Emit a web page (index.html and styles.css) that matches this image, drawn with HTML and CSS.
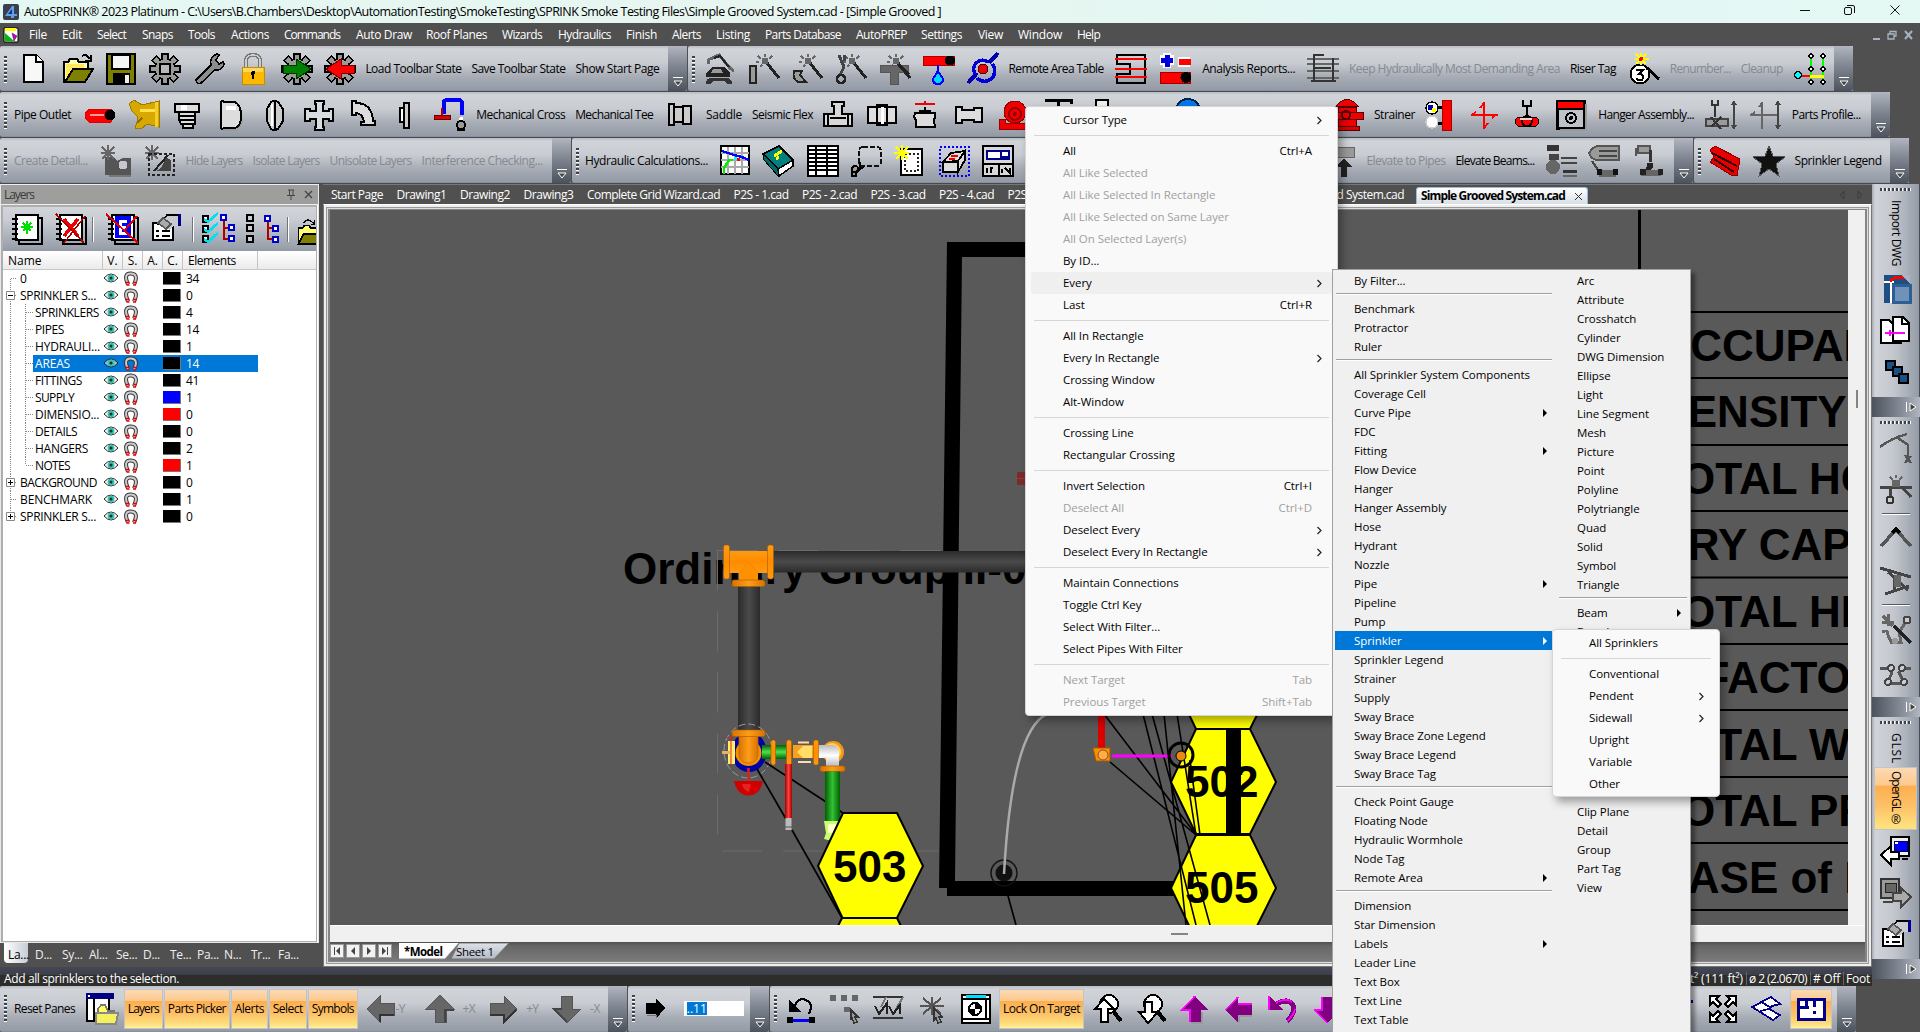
FILE: index.html
```html
<!DOCTYPE html>
<html lang="en">
<head>
<meta charset="utf-8">
<title>AutoSPRINK 2023 Platinum</title>
<link rel="stylesheet" href="styles.css">
</head>
<body>
<div class="app">
  <header class="titlebar">
    <svg class="app-logo" viewBox="0 0 16 16"><rect width="16" height="16" rx="2" fill="#3b3f4c"/><path d="M2 12L9 2h2v8h3v2h-3v2H8v-2z" fill="#5ea0ee"/><path d="M5 10l4-5v5z" fill="#1b2f7c"/></svg>
    <span data-w="917">AutoSPRINK® 2023 Platinum - C:\Users\B.Chambers\Desktop\AutomationTesting\SmokeTesting\SPRINK Smoke Testing Files\Simple Grooved System.cad - [Simple Grooved ]</span>
    <div class="winbtns">
      <svg width="120" height="23" viewBox="0 0 120 23"><path d="M0 10.500h10" stroke="#111"/><rect x="44.500" y="7.500" width="7" height="7" rx="1.500" fill="none" stroke="#111"/><path d="M47 5.500h6q1.500 0 1.500 1.500v6" fill="none" stroke="#111"/><path d="M90.500 5.500l9 9m0-9l-9 9" stroke="#111"/></svg>
    </div>
  </header>
  <nav class="menubar" id="menubar"></nav>
  <div class="tbrow" id="row1"></div>
  <div class="tbrow" id="row2"></div>
  <div class="tbrow" id="row3"></div>
  <main class="workspace">
    <div class="center">
      <div class="panes">
        <section class="layers">
          <div class="layers-box">
            <div class="pane-title"><span data-w="30">Layers</span>
              <svg width="30" height="14" viewBox="0 0 30 14"><path d="M3 2h6M4.500 2v5M8 2v5M2 7.500h8M6 8v4" stroke="#444" fill="none"/><path d="M20 3l7 7m0-7l-7 7" stroke="#444" fill="none" stroke-width="1.300"/></svg>
            </div>
            <div class="pane-body">
              <div class="pane-tools" id="panetools"></div>
              <div class="tree-head"><b>Name</b><b>V.</b><b>S.</b><b>A.</b><b>C.</b><b>Elements</b></div>
              <div class="tree" id="tree"></div>
            </div>
          </div>
          <div class="pane-tabs" id="panetabs"></div>
        </section>
        <section class="docs">
          <div class="doctabs" id="doctabs"></div>
          <div class="frame">
            <div class="view">
              <svg class="canvas" id="canvas" viewBox="330 210 1518 715"></svg>
              <div class="vscroll"><i></i></div>
            </div>
            <div class="hscroll"><i></i></div>
            <div class="sheets">
              <svg width="64" height="17" viewBox="0 0 64 17"><g fill="#f2f2f2" stroke="#999"><path d="M.5 1.500h13v13H.5zM16.500 1.500h13v13h-13zM32.500 1.500h13v13h-13zM48.500 1.500h13v13h-13z"/></g><path d="M4 4v8h1V4zM10 4v8L6 8zM25 4v8l-4-4zM37 4v8l4-4zM52 4v8l4-4zM57 4v8h1V4z" fill="#444"/></svg>
              <svg class="sheettabs" width="112" height="17" viewBox="0 0 112 17"><defs><linearGradient id="shg" x2="0" y2="1"><stop offset="0" stop-color="#dde1e8"/><stop offset="1" stop-color="#b4bac6"/></linearGradient></defs><path d="M52 16L60 0h50L95 16z" fill="url(#shg)" stroke="#777"/><path d="M0 0h60L46 16H0z" fill="#fff"/><path d="M60 0L46 16H0" fill="none" stroke="#888"/><text x="5" y="13" font-weight="700" textLength="39">*Model</text><text x="57" y="13" textLength="38">Sheet 1</text></svg>
            </div>
          </div>
        </section>
      </div>
      <footer class="status"><span data-w="175">Add all sprinklers to the selection.</span><div class="status-right"><span data-w="57">ft² (111 ft²)</span><i></i><span data-w="58">ø 2 (2.0670)</span><i></i><span data-w="27"># Off</span><i></i><span data-w="24">Foot</span></div></footer>
    </div>
    <aside class="dock" id="dock"></aside>
  </main>
  <div class="tbrow bottom" id="row4"></div>
</div>

<div class="menu main" id="menuSelect"></div>
<div class="submenu" id="menuEvery"></div>
<div class="menu small" id="menuSprinkler"></div>
<script src="script.js"></script>
</body>
</html>
```
FILE: styles.css
```css
* { box-sizing: border-box; }
body { margin: 0; width: 1920px; height: 1032px; overflow: hidden; background: #505050; font: 12px/16px "Open Sans", "Noto Sans", sans-serif; color: #000; white-space: nowrap; }
svg { display: block; flex: none; }
.app { display: flex; flex-direction: column; height: 1032px; width: 1920px; overflow: hidden; }
span[data-w] { display: inline-block; flex: none; }

.titlebar { height: 23px; flex: none; display: flex; align-items: center; padding-left: 3px; gap: 5px; background: linear-gradient(90deg, #e4f8f3, #e8f5f0 45%, #e2f8f4 70%, #e4f8f4); font-size: 12.5px; }
.app-logo { width: 16px; height: 16px; }
.winbtns { margin-left: auto; width: 120px; }
.menubar { height: 23px; flex: none; display: flex; align-items: center; background: #505050; color: #fff; padding-left: 3px; }
.menubar .doc-ico { width: 26px; }
.menubar .mdi { margin-left: auto; margin-right: 4px; }

.tbrow { display: flex; height: 46px; flex: none; align-items: stretch; }
.toolbar { display: flex; height: 45px; padding-top: 2px; align-items: center; background: linear-gradient(#b8bdc4 0, #d0d3d8 3px, #c9ccd2 38%, #a7acb5 70%, #949ba6); border-radius: 2px 0 0 2px; border-bottom: 1px solid #8a9098; box-shadow: 0 1px 0 #454a52; flex: none; margin-right: 1px; }
.handle { width: 3px; height: 27px; margin: 0 2px 0 4px; flex: none; background: repeating-linear-gradient(#3c4047 0 2px, #fff 2px 3px, transparent 3px 4px); }
.cap { width: 19px; height: 45px; margin: -2px 0 0 auto; align-self: flex-start; flex: none; background: linear-gradient(#b0b5bf, #858b96 40%, #4d535d); border-radius: 0 3px 3px 0; display: flex; align-items: flex-end; justify-content: center; padding-bottom: 3px; }
.ic { width: 43.8px; display: flex; justify-content: center; flex: none; }
.ic svg { width: 32px; height: 32px; overflow: visible; }
.lb { padding: 0 5px; flex: none; }
.off { color: #858990; }
.hl { height: 40px; display: flex; align-items: center; justify-content: center; background: linear-gradient(#fcd9b4 0, #fcc98d 28%, #fdaf50 30%, #fdc067 62%, #fee07c 90%, #fff0a0); border: 1px solid #c0c4c8; margin-right: 1px; flex: none; }
.gap { flex: none; }
.bottom .toolbar { height: 46px; padding-top: 0; }
.bottom .cap { height: 46px; margin-top: 0; }
.field { width: 60px; height: 15px; background: #fff; display: flex; align-items: center; padding-left: 3px; color: #fff; flex: none; }
.field b { background: #0078d7; font-weight: 400; line-height: 13px; width: 20px; text-align: center; }

.workspace { display: flex; height: 802px; flex: none; }
.center { width: 1872px; display: flex; flex-direction: column; flex: none; }
.panes { display: flex; height: 783px; flex: none; }
.layers { width: 323px; flex: none; display: flex; flex-direction: column; }
.layers-box { width: 319px; height: 759px; display: flex; flex-direction: column; border: 1px solid #e8e8e8; border-top-color: #eee; background: #fff; }
.pane-title { height: 20px; background: #9e9f9d; border-bottom: 1px solid #eee; display: flex; align-items: center; justify-content: space-between; padding: 0 3px; color: #3c3c3c; flex: none; }
.pane-body { flex: 1; border: solid #aeaeae; border-width: 2px 1px 1px 2px; display: flex; flex-direction: column; overflow: hidden; margin-right: 1px; }
.pane-tools { height: 44px; flex: none; display: flex; align-items: center; background: linear-gradient(#d2d5da, #c9ccd2 30%, #939ba6); overflow: hidden; padding-left: 1px; }
.pane-tools > * { flex: none; }
.pane-tools .ic { width: 44px; }
.pane-tools i { width: 2px; height: 25px; background: linear-gradient(90deg, #70757d 50%, #fff 50%); flex: none; }
.tree-head { height: 19px; display: flex; flex: none; background: linear-gradient(#fff, #ebebeb); border-bottom: 1px solid #c8c8c8; }
.tree-head b { font-weight: 400; border-right: 1px solid #c4c4c4; text-align: center; width: 20px; line-height: 20px; }
.tree-head b:first-child { width: 100px; text-align: left; padding-left: 5px; }
.tree-head b:last-child { width: 75px; text-align: left; padding-left: 5px; letter-spacing: -.5px; }
.tree { flex: 1; }
.trow { display: flex; height: 17px; align-items: center; }
.trow .nm { width: 100px; height: 17px; display: flex; flex: none; }
.trow .nm span { line-height: 17px; flex: 1; padding-left: 2px; overflow: hidden; }
.trow .eye, .trow .mag { width: 20px; height: 17px; }
.trow .sw { width: 18px; height: 13px; margin: 0 1px 0 20px; border: solid #777; border-width: 0 1px 1px 0; flex: none; }
.trow .el { width: 76px; line-height: 17px; padding-left: 4px; letter-spacing: -.4px; }
.trow.sel .nm span, .trow.sel .cells { background: #0078d7; color: #fff; }
.cells { display: flex; align-items: center; height: 17px; }
.pane-tabs { height: 24px; display: flex; color: #eee; line-height: 24px; padding-left: 4px; letter-spacing: -.3px; }
.pane-tabs span { width: 27px; padding-left: 4px; }
.pane-tabs span.on { background: linear-gradient(90deg, #fff, #c8ccd4); color: #000; height: 20px; width: 24px; padding-left: 4px; margin-right: 3px; border-radius: 0 0 4px 4px; }

.docs { width: 1549px; flex: none; display: flex; flex-direction: column; }
.doctabs { height: 20px; display: flex; align-items: center; color: #fff; flex: none; padding-left: 8px; border-top: 1px solid #777; background: #505050; }
.doctabs .dt { padding-right: 13.5px; flex: none; }
.doctabs .on { background: linear-gradient(#fff, #d9dfe6); color: #000; font-weight: 700; height: 17px; align-self: flex-end; display: flex; align-items: center; padding: 0 4px; gap: 9px; border: 1px solid #9bd; border-bottom: 0; border-radius: 3px 3px 0 0; }
.doctabs .arr { margin-left: auto; margin-right: 6px; }
.frame { border: 1px solid #777; border-top: 1px solid #fff; box-shadow: inset 0 0 0 2px #eee, inset 0 0 0 3px #999, inset 0 0 0 4px #ddd, inset 0 0 0 6px #858585; padding: 5px 6px 6px; height: 763px; display: flex; flex-direction: column; background: #eee; }
.view { display: flex; height: 715px; flex: none; }
.canvas { width: 1518px; height: 715px; background: #595959; }
.canvas text { font: 700 44px "Liberation Sans", sans-serif; }
.vscroll { width: 18px; background: #f0f0f0; display: flex; justify-content: center; align-items: center; }
.vscroll i { width: 2px; height: 18px; background: #858585; margin-bottom: 337px; }
.hscroll { height: 17px; background: #f0f0f0; border-top: 1px solid #fff; flex: none; display: flex; padding: 7px 0 0 841px; }
.hscroll i { width: 17px; height: 2px; background: #858585; }
.sheets { height: 19px; background: linear-gradient(#505050, #666 20%, #7a7a7a); display: flex; align-items: center; gap: 5px; flex: none; }
.sheettabs text { font: 11.5px "Open Sans", sans-serif; }
.sheettabs text[font-weight] { font-weight: 700; }

.status { height: 19px; flex: none; display: flex; align-items: center; justify-content: space-between; background: linear-gradient(#444854 0, #3b3e49 8px, #2d2d2c 8px); color: #fff; padding: 4px 2px 0 4px; }
.status-right { display: flex; align-items: center; gap: 2.5px; }
.status-right i { width: 1px; height: 13px; background: #666; }

.dock { width: 48px; display: flex; flex-direction: column; }
.vbar { display: flex; flex-direction: column; align-items: center; background: linear-gradient(90deg, #a7abb2 0, #d0d3d9 3px, #c4c8ce 45%, #949ba6); border-right: 1px solid #474d56; padding-top: 4px; }
.vbar .vh { width: 31px; height: 3px; background: repeating-linear-gradient(90deg, #3c4047 0 2px, #fff 2px 3px, transparent 3px 4px); flex: none; }
.vbar .vt { writing-mode: vertical-rl; display: flex; align-items: center; flex: none; }
.vbar .ic { width: 47px; align-items: center; }
.vbar .vsep { width: 28px; height: 2px; background: linear-gradient(#555b64 50%, #fff 50%); margin: 1px 0; flex: none; }
.vbar .vcap { margin-top: auto; height: 20px; width: 48px; background: linear-gradient(90deg, #4d535d, #858b96 60%, #b0b5bf); flex: none; display: flex; justify-content: flex-end; align-items: center; padding-right: 3px; }
.vbar .hl { width: 43px; margin: 0; background: linear-gradient(#fcd9b4 0, #fcc98d 28%, #fdaf50 30%, #fdc067 62%, #fee07c 95%); }

.menu, .submenu { font-size: 11.5px; }
.menu { position: absolute; background: #f9f9f9; border: 1px solid #d5d5d5; border-radius: 4px; padding: 2px 5px; box-shadow: 4px 5px 8px rgba(0,0,0,.35); }
.menu .it { height: 22px; display: flex; align-items: center; padding: 0 20px 0 32px; justify-content: space-between; border-radius: 3px; }
.menu .it.hot { background: #efefef; }
.menu .it.dis { color: #a0a0a0; }
.menu .it svg { margin-right: -11px; }
.menu .sp { height: 9px; padding: 4px 3px; }
.menu .sp::after { content: ""; display: block; height: 1px; background: #d6d6d6; }
.menu.main { left: 1025px; top: 106px; width: 313px; height: 610px; }
.menu.small { left: 1552px; top: 629px; width: 168px; height: 168px; }
.menu.small .it { padding: 0 20px 0 31px; }
.menu .t, .submenu .t { letter-spacing: -.06px; }
.submenu { position: absolute; left: 1332px; top: 269px; width: 359px; height: 770px; background: #f0f0f0; border: 1px solid #a0a0a0; box-shadow: 4px 4px 4px rgba(0,0,0,.4); display: flex; padding: 1px 2px; gap: 6px; }
.submenu .col1 { width: 217px; }
.submenu .col2 { width: 129px; }
.submenu .it { height: 19px; display: flex; align-items: center; justify-content: space-between; padding: 0 5px 0 19px; }
.submenu .col2 .it { padding: 0 6px 0 19px; }
.submenu .it.hot { background: #0078d7; color: #fff; }
.submenu .sp { height: 9px; padding: 3px 0 0 1px; }
.submenu .sp::after { content: ""; display: block; height: 2px; background: linear-gradient(#a0a0a0 50%, #fff 50%); }
```
FILE: script.js
```js
// ---- icon drawings, all on a 32 x 32 grid ----
var K = '#000', G = '#666', S = '#9a9a98';
function P(d, f, s, w) { return '<path d="' + d + '" fill="' + (f || 'none') + '"' + (s ? ' stroke="' + s + '" stroke-width="' + (w || 2) + '"' : '') + '/>'; }
function C(x, y, r, f, s, w) { return '<circle cx="' + x + '" cy="' + y + '" r="' + r + '" fill="' + (f || 'none') + '"' + (s ? ' stroke="' + s + '" stroke-width="' + (w || 2) + '"' : '') + '/>'; }
function R(x, y, w, h, f, s, sw) { return '<rect x="' + x + '" y="' + y + '" width="' + w + '" height="' + h + '" fill="' + (f || 'none') + '"' + (s ? ' stroke="' + s + '" stroke-width="' + (sw || 2) + '"' : '') + '/>'; }
function rot(s, n, step) { var o = ''; for (var i = 0; i < n; i++) o += '<g transform="rotate(' + i * step + ' 16 16)">' + s + '</g>'; return o; }
var gearTeeth = rot(P('M13 6V1h6v5', S, K, 1.500), 8, 45) + C(16, 16, 10, S, K, 1.500) + rot(R(14, 2, 4, 6, S), 8, 45);
var wand = P('M19 10l12 15', '', '#222', 3) + P('M17 1v3M10 3l3 3M24 3l-3 3M8 9h3M12 14l2-2', '', G, 2) + R(14, 5, 6, 6, G);
var prop = P('M3 10h20v17H3z', '#fff', K) + P('M6 18h3m3 0h8M6 23h3m3 0h8', '', K, 2) + P('M15 3h13v10h-5l-3 4-10-7z', '#c8ccd2') + P('M8 12L17 2h11', '', K, 1.500) + R(28, 1, 3, 12, '#008') + P('M8 10l5-5 8 6-5 5z', '#aaa', '#555', 1.5);
var notebook = P('M9 5h23v26H9z', '', K, 1.5) + R(6, 2, 22, 25, '#fff', K) + P('M2 6h6M2 11h6M2 16h6M2 21h6M2 26h6', '', K, 2);
var car = P('M4 11V7L15 2l11 13 4 3', '', G, 3) + P('M10 5l6-2 9 11', '', '#222', 2) + P('M2 24v-4l6-6h12l6 6v4z', '#222') + P('M9 16h8l2 4H7z', S) + P('M2 31q0-6 6-6h14q6 0 6 6h-5q-1-3-4-3h-7q-4 0-5 3z', '#333');
var I = {
  'new': P('M6 2h12l7 7v20H6z', '#f8f8f8', K) + P('M18 2v7h7', '#fff', K),
  open: P('M2 29V9h4l2-3h7l2 3h9v6', '#ffffb0', K) + P('M4 27V11h18v4H11z', '#ffe860') + P('M3 29l8-13h20l-8 13z', '#808000', K) + P('M20 3q4-3 8 3M29 2v6h-6', '', K),
  save: R(2, 1, 28, 30, '#808000', K) + R(7, 2, 18, 14, '#f5f5f5', K, 1.5) + R(8, 20, 17, 11, K) + R(20, 22, 4, 8, '#eee'),
  gear: gearTeeth + R(11, 11, 10, 10, '#b5b7ba', K, 1.5),
  wrench: P('M3 27L18 12q-2-8 6-11l2 1-3 5 3 4 4-2 1 2q-2 7-9 6L8 30q-4 2-5-3z', '#8d8d8d', K, 1.500),
  lock: P('M9 14V8q0-6 7-6t7 6v6', '', '#777', 4) + P('M9 14V8q0-6 7-6t7 6v6', '', '#ccc', 1.5) + R(5, 14, 22, 17, '#fdb800', '#c88a00', 1) + R(6, 15, 20, 4, '#ffd75a') + C(16, 20, 2, K) + P('M16 20v6', '', K, 2),
  gogreen: gearTeeth + P('M2 12h13V6l15 10-15 10v-6H2z', '#008000', '#003800', 1),
  gored: gearTeeth + P('M30 12H17V6L2 16l15 10v-6h13z', '#f00', '#700', 1),
  crane: car,
  w1: wand + R(2, 13, 6, 17, S, '#222', 2),
  w2: wand + P('M3 18h8l-2 4 6 7H7q-6-3-4-11z', S, '#222', 2),
  w3: wand + P('M4 2l5 12-4 8M9 2v6', '', '#444', 3) + C(6, 26, 4, '', '#222', 2.500),
  w4: wand + P('M1 12h28v7H19v12h-8V19H1z', G, '#555', 1) + P('M20 12l10 10', '', '#222', 3),
  drop: R(0, 3, 31, 9, '#f00', '#a00', 1) + C(27, 7.500, 5, K) + P('M15 12v6', '', '#00f', 2) + P('M15 18l5 8q0 5-5 5t-5-5z', '#00d8ff', '#00f', 2),
  target: P('M1 30L10 20M22 10L31 0', '', '#0000b0', 4) + P('M8 21a9 9 0 0 1 13-12M25 11a9 9 0 0 1-15 14', '', '#0000d8', 3.500) + C(16, 16, 5, '#e00', '#400', 1),
  tbl: P('M2 2h28v28H2v-9h13V11H2z', '', K, 2) + P('M0 6h32M0 16h32M0 24h32', '', '#f00', 1.800) + P('M3 11h11M3 21h11', '', K, 2),
  plus: R(1, 2, 14, 10, '#fff') + R(4, 0, 8, 15, '#fff') + P('M8 2v12M2 7h12', '', '#00d', 5) + R(19, 4, 12, 10, '#fff') + R(20, 6, 12, 6, '#f00') + R(1, 19, 30, 11, '#f00', '#900', 1) + C(27, 24.500, 5.500, K),
  sheet: P('M0 6h32M0 11h32M0 18h32M0 25h32', '', G, 2.500) + P('M7 1v27M26 5v23M7 2h10M4 28h25', '', '#333', 2.500) + P('M8 15h16', '', '#333', 2),
  riser: C(13, 21, 9.500, '#fff', K, 2) + P('M20 15l12 11', '', K, 3) + P('M14 0v12M8 6h14M9 1l10 10M19 1L9 11', '', '#ff0', 2) + C(14, 6, 2, '#f00') + P('M9 17h7l-4 4q5 0 4 4t-7 1', '', K, 2.200),
  nodes: P('M17 4v24M29 4v24', '', '#0f0', 2.500) + P('M4 23h12', '', '#f00', 2.500) + P('M16 23h14', '', '#ff0', 3) + C(4, 22, 3.500, '#0ff', K, 1.500) + C(17, 3, 2, '#fff', K, 1.500) + C(29, 3, 2, '#fff', K, 1.500) + C(17, 16, 2, '#fff', K, 1.500) + C(29, 16, 2, '#fff', K, 1.500) + C(17, 29, 2, '#fff', K, 1.500) + C(29, 29, 2, '#fff', K, 1.500),
  outlet: P('M5 10h22q5 6 0 13H5q-8-6 0-13z', '#f00', '#d00', 1) + P('M6 16h14', '', '#f99', 1.500) + C(26, 16, 5.500, K),
  ytee: P('M1 5l5-4 8 5 17-4v26l-12-3-6 5-6-1 2-6 1-5-6-6z', '#d9a800', '#9c7a00', 1) + P('M12 11h16', '', '#ffe14a', 3) + P('M28 3v25', '', '#f6cd28', 3) + P('M9 24l5-5', '', '#8c6c00', 2),
  cap: P('M4 5h24v8H4zM8 13h16v4H8zM8 17h16v4H8zM8 21h16v4H10zM12 25h10v4H12z', '#ddd', K, 2) + R(10, 6, 6, 5, '#fff'),
  plug: P('M6 3q2-2 3 0h11q6 3 6 14t-6 12H9q-2 2-3 0z', '#ddd', K, 2) + R(11, 7, 10, 4, '#fff') + P('M27 22q-1 7-6 9H8', '', S, 1.5),
  coup: P('M12 3q3-2 7 0l5 7v12l-5 8q-4 2-7 0l-4-8V10z', '#ccc', K, 2) + P('M16 3v27', '', K, 1.500) + P('M13 5v22', '', '#fff', 2),
  cross: P('M12 2h9v3h-1v7h6v-2h4v12h-4v-2h-6v8h1v3h-9v-3h1v-8H7v2H2V10h5v2h6V5h-1z', '#d8dbe0', K, 2),
  elbow: P('M5 2h4v2q16 0 17 18h2v4H14v-3h3q-1-8-8-9v2H5z', '#ddd', K, 2),
  flange: R(14, 4, 5, 25, '#ccc', K, 2) + P('M10 9h4v14h-4z', '#fff', K, 2),
  hose: P('M10 15V3q0-2 4-2h10q4 0 4 4v11', '', '#00f', 4) + R(0, 16, 16, 4, '#d00', '#600', 1) + P('M8 9v9', '', '#a00', 2) + C(27, 20, 2, '#fff') + C(27, 26, 4, S, K, 2) + P('M23 31h8', '', K, 2),
  reducer: P('M5 5h5v3h9V7h8v18h-8v-2h-9v3H5z', '#ccc', K, 2) + P('M10 8v15M19 8v15', '', K, 1.800),
  tee: P('M10 3h12v4h-2v8h10v12H2V15h10V7h-2z', '#d8d8d8', K, 2) + P('M6 15v12M26 15v12M8 19h16', '', K, 1.500),
  coup2: P('M2 8h28v16H2zM11 6h10v20H11z', '#ddd', K, 2) + P('M16 8v17', '', '#fff', 3),
  valve: P('M6 14h20v4l-1 3 1 7H7V21l-2-3z', '#ddd', K, 2) + P('M6 5h20M16 2v4', '', '#e00', 2.500) + P('M10 12h12M16 8v5', '', K, 2),
  bush: P('M3 8h6v3h12V9h8v14h-8v-2H9v3H3z', '#ddd', K, 2),
  pump: C(18, 13, 11, '#e00', '#900', 1) + C(18, 15, 6, '', '#900', 2) + C(18, 15, 2, '#900') + P('M2 20h6v4h22v6H2z', '#e00', '#900', 1),
  ped: P('M4 1h26v4M17 0v8', '', K, 3), box: R(11, 1, 12, 12, '#eee', K, 2),
  ball: C(16, 12, 12, '#07e', '#024', 2), blank: '',
  hydrant: P('M4 7q11-13 22 0zM6 8h18v21H6z', '#e00', '#500', 1) + R(1, 13, 30, 7, '#e00', '#500', 1) + C(14, 16, 4, '', '#500', 2) + R(3, 27, 24, 4, '#d00', '#500', 1),
  wall: R(18, 1, 9, 30, '#f00', '#a00', 1) + C(8, 9, 6, '#fff', K, 1.500) + R(4, 6, 5, 5, '#00a') + R(8, 9, 4, 4, '#ff0') + C(8, 23, 6, '#fff', '#ccc', 1.500) + P('M14 8h4M14 24h4', '', K, 3),
  axes: P('M3 16h27M16 3v27M16 4l-4 5M16 29l4-5M4 16l4-3M28 16l-4 3', '', '#f00', 1.800),
  hanger: P('M12 1v6h8V1M16 7v12', '', K, 2) + P('M7 18h18q6 4 0 9H7q-6-4 0-9z', '#f00', K, 1) + C(16, 22, 5, '', K, 2) + P('M9 20h12', '', '#fcc', 1.500),
  panel: R(2, 2, 27, 27, '#bfc3c9', K, 3) + R(3, 3, 25, 6, '#f00') + P('M2 10h27', '', K, 2) + C(16, 19, 5, '', K, 2) + C(16, 19, 2, K) + P('M31 5v26H5', '', S, 2),
  hangG: P('M7 1v5h6V1M10 6v12', '', '#333', 2.500) + R(1, 20, 22, 7, S, '#444', 2) + P('M6 18l10 12M16 18L6 28', '', '#333', 2) + P('M29 3v25', '', '#444', 2) + P('M26 6l3-5 3 5zM26 26l3 5 3-5z', '#444'),
  axesG: P('M1 16h21M13 3v27M13 4l-3 4M2 16l4-3', '', G, 2) + P('M29 3v25', '', '#444', 2) + P('M26 6l3-5 3 5zM26 26l3 5 3-5z', '#444') + P('M22 16h6', '', G, 2),
  det1: P('M5 12h9l3 4 6-3h8v17H5z', '#555') + C(23, 20, 4.5, '#c4c8ce') + P('M2 2l12 12M8 0v15M1 8h14M14 2L2 14', '', G, 2.200) + P('M9 31h22', '', '#777', 2),
  det2: P('M8 26q10 2 13-14l6 3v11z', '#444') + P('M10 26l14-16', '', '#222', 2) + P('M2 2l12 12M8 0v15M1 8h14M14 2L2 14', '', G, 2.200) + '<rect x="5" y="9" width="25" height="21" fill="none" stroke="#222" stroke-width="2.500" stroke-dasharray="3 2"/>',
  graph: R(2, 1, 28, 28, '#fff', K, 2) + P('M9 2v27M16 2v27M23 2v27M2 8h28M2 15h28M2 22h28', '', '#aaa', 1.500) + P('M3 6l12 4 8 2 7 3', '', '#00f', 2.500) + P('M5 29v-6l5-8h4', '', '#0e0', 2.500) + P('M15 13h3', '', '#0ff', 3) + R(18, 13, 3, 3, '#f00'),
  book: P('M0 9L16 1l14 14L15 24z', '#008080', K, 1.500) + P('M0 9l15 15v7L1 15z', '#006868', K, 1) + P('M15 24l15-9v6l-14 10z', '#fff', K, 1.500) + P('M11 11l8-5M13 14l3-2', '', '#ff0', 3),
  grid: R(1, 1, 30, 30, '#fff', K, 2) + P('M1 5h30M1 9h30M1 13h30M1 17h30M1 21h30M1 25h30', '', K, 1.800) + P('M9 1v30M20 1v30', '', K, 2),
  lasso: '<rect x="9" y="2" width="22" height="19" rx="4" fill="none" stroke="#111" stroke-width="2" stroke-dasharray="5 2"/>' + P('M10 17v7q-2 4-5 2', '', K, 2) + C(5, 24, 3, S, K, 2) + C(4, 29, 2.500, S, K, 2) + P('M7 25l7-3', '', K, 2),
  newsel: R(7, 4, 21, 26, '#fff', K, 2) + '<rect x="11" y="9" width="13" height="17" fill="none" stroke="#222" stroke-width="1.500" stroke-dasharray="2 2"/>' + P('M8 0v15M0 8h15M2 2l12 12M14 2L2 14', '', '#ff0', 2),
  rem: '<rect x="1.500" y="1.500" width="29" height="29" fill="none" stroke="#00f" stroke-width="2" stroke-dasharray="2 2"/>' + P('M5 17l8-9 14-2-7 10zM5 17h15v10H5zM20 16l7-10v9l-7 12z', '#ddd', K, 1.800) + P('M13 11h7M11 14h6', '', '#e00', 2.500),
  calc: R(1, 1, 30, 30, '#d8d8d8', K, 2) + P('M5 6h22v8H5z', '#fff', '#008', 2) + P('M19 6v6h8', '', '#008', 2) + P('M1 19h30M17 19v12', '', K, 2) + P('M5 23v5M8 23h3M9 23v5M20 24v4M23 23l5 5v-5', '', K, 1.800),
  elev: R(5, 2, 20, 10, S, G, 1) + P('M15 14l9 8h-6v10h-6V22H6z', '#222'),
  e1: R(2, 0, 12, 6, '#333') + R(4, 9, 10, 6, '#444') + C(8, 22, 7, G) + P('M16 13h16M16 18h16', '', '#444', 1.500) + P('M18 26h14', '', '#333', 3) + P('M18 31h14', '', G, 2),
  e2: P('M8 1h22v14H8q-6-1-8-7 4-6 8-7z', S, '#555', 2) + P('M10 6h18M10 11h18M3 16l6 9', '', '#444', 2) + R(10, 25, 17, 7, G) + R(8, 24, 5, 6, '#111') + R(24, 24, 5, 6, '#111'),
  e3: R(5, 1, 12, 7, S, '#555', 2) + P('M3 3v8', '', '#555', 2) + P('M17 5v12', '', '#333', 3) + P('M14 18h6l-1 5-6 4', '#222', '#222', 1) + R(8, 25, 20, 6, G) + R(7, 24, 6, 6, '#222') + R(25, 24, 5, 6, '#222'),
  beam: P('M1 5l5-4 25 13-3 17-6-1-21-13 4-5z', '#e80000', '#800', 1) + P('M3 8l25 13M5 14l20 13', '', '#300', 2),
  star: P('M16 1l4 10 12 1-9 7 3 12-10-7-10 7 3-12-9-7 12-1z', '#111', '#555', 1),
  importd: R(4, 2, 26, 28, '#1f4f82') + P('M13 12h17v17H13z', '#6f92b8', '#2d5f95', 3) + P('M4 9h10M11 10v20', '', '#fff', 2.500) + P('M10 8l6-4h9', '', '#f00', 3) + P('M22 2h8v9z', '#aab4c4'),
  swap: P('M1 5h8l3 3h9v20H1z', '#fff', K, 2) + P('M13 2h10l6 6v18H13z', '#fff', K, 2) + P('M22 2v7h7', '', K, 2) + P('M5 18h20M10 15v6', '', '#f0f', 2),
  cubes: R(6, 4, 9, 9, '#1c4f85', K, 2) + R(13, 10, 9, 9, '#1c4f85', K, 2) + R(19, 17, 9, 9, '#1c4f85', K, 2),
  v1: P('M0 16q10-8 27-13M18 7l10 7v12M25 24l6 8M31 25l-6 7', '', '#555', 2.500),
  v2: P('M0 12h32M10 12v10M22 12l9 10', '', '#444', 3) + R(12, 5, 8, 7, G) + P('M16 0v3M10 2l3 3M22 2l-3 3', '', G, 2) + C(10, 25, 3.5, '#ccc', '#333', 2),
  v3: P('M1 24L16 8l15 16', '', '#555', 3.500) + P('M12 11l4-4 4 4', '', K, 3),
  v4: P('M0 3l31 9M14 10v17M8 7l20 18M5 29l24-8', '', '#444', 3) + R(14, 10, 7, 12, G),
  v5: P('M3 2l10 10M8 0v12M2 8h12M2 18q6-3 6 3l3 7h10l-2-10 7-10', '', '#666', 3) + C(27, 6, 3.5, '#ccc', '#444', 2) + C(15, 27, 3, S) + P('M14 12l17 17', '', '#222', 4),
  v6: P('M0 9h9l3 5-4 8M31 9h-8l-4 5 5 9M9 24h14', '', '#555', 3) + C(11, 9, 3, '#ccc', '#444', 2) + C(22, 9, 3, '#ccc', '#444', 2) + C(8, 23, 3, '#ccc', '#444', 2) + C(24, 23, 3, '#ccc', '#444', 2),
  monL: P('M11 2h18v19H11z', '#eee', K, 2) + R(14, 6, 13, 10, '#00f', '#006', 1) + R(15, 7, 3, 2, '#fff') + P('M1 20l10-9v6h8v7h-8v6z', '#fff', K, 2) + P('M22 24h6', '', K, 2),
  monR: P('M1 2h18v19H1z', S, '#333', 2) + R(5, 6, 11, 9, G, '#222', 1) + P('M31 20l-10-9v5h-8v8h8v6z', '#aaa', '#444', 2) + P('M3 25h10', '', '#444', 2),
  prop: prop,
  ladd: notebook + P('M17 8v13M11 14h12M13 10l8 8M21 10l-8 8', '', '#0d0', 1.800),
  ldel: notebook + P('M10 6l14 17M24 6L10 23', '', '#e00', 3.500) + P('M2 1l28 29M31 3L10 30', '', '#a00', 1.500),
  ledit: notebook + R(9, 3, 16, 22, '#00f') + P('M21 8h-7v12h7M14 14h6', '', '#fff', 3) + P('M0 1l32 29M31 3L18 18', '', '#d00', 2),
  checks: P('M1 3h5v6H1zM1 13h5v6H1zM1 23h5v6H1z', '#fff', K, 1.500) + P('M2 6l4 3L16 0M2 16l4 3 10-9M2 26l4 3 10-9', '', '#00e0f0', 2.500) + P('M22 7v19h7M22 15h7', '', '#a00', 2) + P('M19 2h5v5h-5zM27 12h5v5h-5zM27 23h5v5h-5z', '#fff', '#00c', 2),
  boxes: P('M1 2h6v6H1zM1 12h6v6H1zM1 23h6v6H1z', '#ccc', K, 2) + P('M22 7v19h7M22 15h7', '', '#a00', 2) + P('M19 3h5v5h-5zM27 13h5v5h-5zM27 24h5v5h-5z', '#fff', '#00c', 2),
  openS: '<g transform="translate(0 3) scale(.8 .95)">' + P('M2 29V13h5l2-3h6l2 3h8v5', '#ffff70', K) + P('M2 29l6-10h22l-6 10z', '#808000', K) + P('M8 7q6-6 13 1M22 4v5h-5', '', K, 1.500) + '</g>',
  window: R(1, 1, 22, 27, '#fff', K, 2) + R(0, 0, 28, 6, '#000080') + P('M8 6v22', '', K, 2) + P('M12 20v-4l3-4h4l3 6h6v3', '#ffff60', '#777', 1.500) + P('M10 20h22l-2 11H10z', '#f5f060', '#888', 2) + R(2, 2, 2, 2, '#fff'),
  aL: P('M2 16L15 3v7h14v12H15v7z', G, '#555', 1) + P('M15 29v-7h14', '', '#333', 2),
  aU: P('M16 2l14 14h-8v13H11V16H2z', G, '#555', 1) + P('M21 29V17h9', '', '#444', 2),
  aR: P('M30 16L17 3v7H3v12h14v7z', G, '#555', 1) + P('M3 22h14v7l12-12', '', '#333', 2),
  aD: P('M16 30L2 16h8V3h11v13h9z', G, '#555', 1) + P('M11 16H3l13 13', '', '#444', 2),
  bR: P('M26 15L17 6v4H7v11h10v5z', K) + P('M8 22h9v3', '', '#777', 1),
  undo: P('M8 16Q12 6 18 6q12 3 6 15', '', K, 2.200) + P('M4 7v12h12z', K) + P('M6 27h20', '', '#00f', 3) + R(2, 24, 6, 6, K) + R(24, 24, 6, 6, K),
  pick: R(1, 2, 6, 6, G) + R(12, 2, 6, 6, G) + R(23, 2, 6, 6, G) + R(15, 14, 6, 5, G) + P('M22 17l7 7h-3l2 5-3 1-2-5-1 2z', S, '#333', 1.500),
  checksG: P('M1 4h30M1 25h30', '', '#333', 2) + P('M14 4L9 14M31 4l-7 12', '', '#777', 2) + P('M3 13l4 8 8-11v11M17 13l4 8 7-9v9', '', '#222', 2.200),
  burst: P('M16 4v18M4 13h24M7 5l18 16M25 5L7 21', '', '#555', 2.200) + P('M18 15l8 9h-3l2 5-3 1-2-5-2 2z', S, '#333', 1.500),
  wheel: R(2, 2, 28, 28, '#fff', K, 2.500) + P('M2 6h28', '', K, 2) + R(6, 2, 20, 3, '#0df') + P('M26 6v20M2 26h28', '', K, 2) + C(15, 16, 6, '#fff', K, 2) + P('M15 16v-6a6 6 0 0 1 6 6zM15 16v6a6 6 0 0 1-6-6z', K),
  zU: C(17, 11, 9, '#fff', K, 2) + P('M22 19l7 9', '', K, 4) + P('M12 6l10 10h-6v13H9V16H3z', '#fff', K, 2),
  zD: C(17, 11, 9, '#fff', K, 2) + P('M22 19l7 9', '', K, 4) + P('M12 30L3 19h6V9h7v10h6z', '#fff', K, 2),
  pU: P('M23 19v11H12', '', '#999', 1.500) + P('M16 3l13 14h-7v12H11V17H3z', '#800080') + P('M16 3L3 17h8v12', '', '#f0f', 1.500),
  pL: P('M16 29v-6h13', '', '#999', 1.500) + P('M3 17L15 4v7h14v11H15v8z', '#800080') + P('M15 4L3 17M15 11h14', '', '#f0f', 1.500),
  pT: P('M8 12q12-8 18 0 3 8-6 16', '', '#800080', 5) + P('M2 3v14h14z', '#800080') + P('M2 3v14M9 10q10-6 16-1M20 28q6-4 8-12', '', '#f0f', 1.500),
  pD: P('M16 30L4 17h7V4h11v13h7z', '#800080') + P('M16 30L4 17h7V4', '', '#f0f', 1.500),
  expand: P('M3 3h9L9 6l5 5-3 3-5-5-3 3zM29 3h-9l3 3-5 5 3 3 5-5 3 3zM3 29h9l-3-3 5-5-3-3-5 5-3-3zM29 29h-9l3-3-5-5 3-3 5 5 3-3z', '#fff', K, 1.800),
  persp: P('M1 14L20 4l9 7-8 2-3 3 11 6-7 5z', '#fff', '#008', 1.800) + P('M10 9l9 5M9 18l9-2', '', '#008', 1.800),
  plan: R(3, 6, 26, 20, '#fff', '#008', 3) + P('M11 6v8H5M19 6v8M19 18v3M11 14h3', '', '#008', 3),
  blue: P('M24 8v18M24 8h5', '', '#008', 3)
};
function icon(n) { return '<div class="ic"><svg viewBox="0 0 32 32" shape-rendering="crispEdges">' + I[n] + '</svg></div>'; }
var capArrow = '<svg width="12" height="12" viewBox="0 0 12 12"><path d="M1 1.500h10M2 5h8L6 10z" stroke="#fff" fill="#444"/></svg>';

// toolbar item: "icon" | [text, width, 'off'|'hl'] | number (gap)
function toolbar(items, w) {
  return '<div class="toolbar" style="width:' + w + 'px"><div class="handle"></div>' + items.map(function (t) {
    if (typeof t === 'number') return '<div class="gap" style="' + (t < 0 ? 'margin-left' : 'width') + ':' + t + 'px"></div>';
    if (typeof t === 'string') return t[0] === '<' ? t : icon(t);
    if (t[2] === 'hl') return '<div class="hl" style="width:' + (t[1] + 8) + 'px"><span data-w="' + t[1] + '">' + t[0] + '</span></div>';
    return '<div class="lb ' + (t[2] || '') + '"><span data-w="' + t[1] + '">' + t[0] + '</span></div>';
  }).join('') + '<div class="cap">' + capArrow + '</div></div>';
}
function set(id, h) { document.getElementById(id).innerHTML = h; }

set('row1', toolbar([3, 'new', 'open', 'save', 'gear', 'wrench', 'lock', 'gogreen', 'gored', -2, ['Load Toolbar State', 96], ['Save Toolbar State', 94], ['Show Start Page', 84]], 687) +
  toolbar([1, 'crane', 'w1', 'w2', 'w3', 'w4', 'drop', 'target', -1, ['Remote Area Table', 95], 1, 'tbl', 'plus', ['Analysis Reports...', 93], 1, 'sheet', -1, ['Keep Hydraulically Most Demanding Area', 211, 'off'], ['Riser Tag', 46], 'riser', ['Renumber...', 61, 'off'], ['Cleanup', 42, 'off'], 'nodes'], 1165));
set('row2', toolbar([['Pipe Outlet', 57], 2, 'outlet', 'ytee', 'cap', 'plug', 'coup', 'cross', 'elbow', 'flange', 'hose', -1, ['Mechanical Cross', 89], ['Mechanical Tee', 78], 'reducer', -1, ['Saddle', 36], ['Seismic Flex', 61], -2, 'tee', 'coup2', 'valve', 'bush', 'pump', 'ped', 'box', 'blank', 'ball', 116, 'hydrant', -1, ['Strainer', 41], -2, 'wall', 'axes', 'hanger', 'panel', ['Hanger Assembly...', 96], 'hangG', 'axesG', ['Parts Profile...', 69]], 1890));
set('row3', toolbar([['Create Detail...', 74, 'off'], 1, 'det1', 'det2', -1, ['Hide Layers', 57, 'off'], ['Isolate Layers', 67, 'off'], ['Unisolate Layers', 82, 'off'], ['Interference Checking...', 121, 'off']], 571) +
  toolbar([-1, ['Hydraulic Calculations...', 123], 'graph', 'book', 'grid', 'lasso', 'newsel', 'rem', 'calc', 304, 'elev', -6, ['Elevate to Pipes', 79, 'off'], ['Elevate Beams...', 79], 'e1', 'e2', 'e3'], 1121) +
  toolbar(['beam', 'star', -1, ['Sprinkler Legend', 87]], 215));
set('row4', toolbar([['Reset Panes', 61], 'window', ['Layers', 31, 'hl'], ['Parts Picker', 58, 'hl'], ['Alerts', 29, 'hl'], ['Select', 30, 'hl'], ['Symbols', 42, 'hl'], 'aL', -12, ['-Y', 9, 'off'], 8, 'aU', -4, ['+X', 13, 'off'], 1, 'aR', -4, ['+Y', 12, 'off'], 2, 'aD', -4, ['-X', 10, 'off']], 627) +
  toolbar([-4, 'bR', 7, '<div class="field"><b>..11</b></div>'], 141) +
  toolbar(['undo', 'pick', 'checksG', 'burst', 'wheel', 1, ['Lock On Target', 77, 'hl'], 1, 'zU', 'zD', 'pU', 'pL', 'pT', 'pD', 309, 'blue', 'expand', 'persp', 1, '<div class="hl" style="width:42px">' + icon('plan') + '</div>'], 1086));

// menu bar
var bar = [['File', 18], ['Edit', 20], ['Select', 29], ['Snaps', 31], ['Tools', 27], ['Actions', 38], ['Commands', 56], ['Auto Draw', 56], ['Roof Planes', 61], ['Wizards', 40], ['Hydraulics', 53], ['Finish', 31], ['Alerts', 29], ['Listing', 34], ['Parts Database', 76], ['AutoPREP', 51], ['Settings', 41], ['View', 25], ['Window', 44], ['Help', 23]];
var barStart = [29, 62, 97, 142, 188, 231, 284, 356, 426, 502, 558, 626, 672, 716, 765, 856, 921, 978, 1018, 1077];
set('menubar', '<svg class="doc-ico" width="26" height="16" viewBox="0 0 26 16"><path d="M1 1h14v14H1z" fill="#fff" stroke="#000"/><path d="M2 1h11v3H2z" fill="#ff0"/><path d="M2 6l9 8H2z" fill="#0b0"/><path d="M9 6l5 3-3 5z" fill="#c0c" stroke="#222" stroke-width=".5"/></svg>' +
  bar.map(function (b, i) { return '<div class="m" style="padding-right:' + ((barStart[i + 1] || 1117) - barStart[i] - b[1]) + 'px"><span data-w="' + b[1] + '">' + b[0] + '</span></div>'; }).join('') +
  '<svg class="mdi" width="44" height="14" viewBox="0 0 44 14"><path d="M1 11h7" stroke="#a9b2c4" stroke-width="2"/><path d="M16 6h6v5h-6zM18 6V3.500h6V8h-2" fill="none" stroke="#a9b2c4" stroke-width="1.300"/><path d="M33 3l7 8M40 3l-7 8" stroke="#a9b2c4" stroke-width="2"/></svg>');

// layers pane
function gp(n) { return '<div style="width:' + n + 'px"></div>'; }
set('panetools', icon('ladd') + icon('ldel') + '<i></i>' + gp(6) + icon('ledit') + icon('prop') + gp(4) + '<i></i>' + gp(2) + icon('checks') + icon('boxes') + gp(3) + '<i></i>' + gp(2) + icon('openS'));
var rows = [['0', 0, 34, K], ['SPRINKLER S...', 0, 0, K, '-'], ['SPRINKLERS', 1, 4, K], ['PIPES', 1, 14, K], ['HYDRAULI...', 1, 1, K], ['AREAS', 1, 14, K, '', 1], ['FITTINGS', 1, 41, K], ['SUPPLY', 1, 1, '#00f'], ['DIMENSIO...', 1, 0, '#f00'], ['DETAILS', 1, 0, K], ['HANGERS', 1, 2, K], ['NOTES', 1, 1, '#f00'], ['BACKGROUND', 0, 0, K, '+'], ['BENCHMARK', 0, 1, K], ['SPRINKLER S...', 0, 0, K, '+']];
set('tree', rows.map(function (r, i) {
  var w = r[1] ? 30 : 15, d = '';
  d += '<path d="M7.500 ' + (i === 0 ? 9 : 0) + 'V' + (i === 14 ? 9 : 17) + '" stroke="#888" stroke-dasharray="1 1"/>';
  if (r[1]) d += '<path d="M22.500 0V' + (r[0] === 'NOTES' ? 8 : 17) + 'M23 8.500h7" stroke="#888" stroke-dasharray="1 1"/>';
  else d += '<path d="M8 8.500h6" stroke="#888" stroke-dasharray="1 1"/>';
  if (r[4]) d += '<path d="M3.500 4.500h8v8h-8z" fill="#fff" stroke="#888"/><path d="M5 8.500h5' + (r[4] === '+' ? 'M7.500 6v5' : '') + '" stroke="#000"/>';
  var wd = { 'SPRINKLERS': 64, 'SPRINKLER S...': 76, 'HYDRAULI...': 65, 'DIMENSIO...': 64, 'BACKGROUND': 77, 'BENCHMARK': 72, 'FITTINGS': 47, 'HANGERS': 53, 'AREAS': 35, 'PIPES': 29, 'DETAILS': 42, 'NOTES': 35, 'SUPPLY': 39 }[r[0]];
  return '<div class="trow' + (r[5] ? ' sel' : '') + '"><div class="nm"><svg width="' + w + '" height="17">' + d + '</svg><span' + (wd ? ' data-fit="' + wd + '"' : '') + '>' + r[0] + '</span></div><div class="cells">' +
    '<svg class="eye" viewBox="0 0 20 17"><path d="M1 8q7-8 14 0-7 8-14 0z" fill="' + (r[5] ? '#9cc4e4' : '#fff') + '" stroke="#222"/><circle cx="8" cy="8" r="3.500" fill="#3cc0a8"/><circle cx="8" cy="8" r="1.500" fill="#033"/></svg>' +
    '<svg class="mag" viewBox="0 0 20 17"><path d="M5 14.500Q0 3 8 3.500t3 11" fill="none" stroke="#333" stroke-width="4"/><path d="M5 14.500Q0 3 8 3.500t3 11" fill="none" stroke="#ccc" stroke-width="2"/><path d="M2.500 12.500h4M10 12.500h4M3.500 15h3M10 15h3" stroke="#e00" stroke-width="1.300"/></svg>' +
    '<div class="sw" style="background:' + r[3] + '"></div><div class="el">' + r[2] + '</div></div></div>';
}).join(''));
set('panetabs', ['La...', 'D...', 'Sy...', 'Al...', 'Se...', 'D...', 'Te...', 'Pa...', 'N...', 'Tr...', 'Fa...'].map(function (t, i) { return '<span class="' + (i ? '' : 'on') + '">' + t + '</span>'; }).join(''));

// document tabs
set('doctabs', [['Start Page', 52], ['Drawing1', 50], ['Drawing2', 50], ['Drawing3', 50], ['Complete Grid Wizard.cad', 133], ['P2S - 1.cad', 55], ['P2S - 2.cad', 55], ['P2S - 3.cad', 55], ['P2S - 4.cad', 55], ['P2S - 5.cad', 55]].map(function (t) { return '<div class="dt"><span data-w="' + t[1] + '">' + t[0] + '</span></div>'; }).join('') +
  '<div class="gap" style="width:223px"></div><div class="dt" style="padding-right:12px"><span data-w="105">Grooved System.cad</span></div><div class="on"><span data-w="144">Simple Grooved System.cad</span><svg width="9" height="9" viewBox="0 0 9 9"><path d="M1 1l7 7m0-7L1 8" stroke="#333"/></svg></div>' +
  '<svg class="arr" width="28" height="10" viewBox="0 0 28 10"><path d="M6 1v8L2 5zM20 1v8l4-4z" fill="none" stroke="#3a3a3a"/></svg>');

// side dock
function vcap() { return '<div class="vcap"><svg width="12" height="12" viewBox="0 0 12 12"><path d="M1.500 1v10M5 2v8l6-4z" stroke="#fff" fill="#444"/></svg></div>'; }
function vi(n, h) { return '<div style="height:' + h + 'px;display:flex">' + icon(n) + '</div>'; }
set('dock',
  '<div class="vbar" style="height:233px"><div class="vh"></div><div class="vt" style="height:77px;padding-top:9px"><span data-v="66">Import DWG</span></div>' + vi('importd', 42) + vi('swap', 42) + vi('cubes', 42) + vcap() + '</div>' +
  '<div class="vbar" style="height:300px"><div class="vh"></div>' + vi('v1', 46) + vi('v2', 42) + '<div class="vsep"></div>' + vi('v3', 44) + vi('v4', 44) + '<div class="vsep"></div>' + vi('v5', 46) + vi('v6', 44) + vcap() + '</div>' +
  '<div class="vbar" style="height:262px"><div class="vh"></div><div class="vt" style="height:43px;padding-top:9px"><span data-v="31">GLSL</span></div><div class="hl" style="height:63px"><div class="vt"><span data-v="56">OpenGL®</span></div></div>' + vi('monL', 42) + vi('monR', 42) + vi('prop', 42) + vcap() + '</div>');

// menus
var chev = '<svg width="7" height="9" viewBox="0 0 7 9"><path d="M1.500 1l3.500 3.500L1.500 8" fill="none" stroke="#222" stroke-width="1.200"/></svg>';
function menu(list) {
  return list.map(function (s) {
    if (s === '-') return '<div class="sp"></div>';
    var dis = s[0] === '~', hot = s[0] === '*'; if (dis || hot) s = s.slice(1);
    var p = s.split('|');
    return '<div class="it' + (dis ? ' dis' : '') + (hot ? ' hot' : '') + '"><span class="t">' + p[0] + '</span>' + (p[1] === '>' ? chev : p[1] ? '<span class="t">' + p[1] + '</span>' : '') + '</div>';
  }).join('');
}
set('menuSelect', menu(['Cursor Type|>', '-', 'All|Ctrl+A', '~All Like Selected', '~All Like Selected In Rectangle', '~All Like Selected on Same Layer', '~All On Selected Layer(s)', 'By ID...', '*Every|>', 'Last|Ctrl+R', '-', 'All In Rectangle', 'Every In Rectangle|>', 'Crossing Window', 'Alt-Window', '-', 'Crossing Line', 'Rectangular Crossing', '-', 'Invert Selection|Ctrl+I', '~Deselect All|Ctrl+D', 'Deselect Every|>', 'Deselect Every In Rectangle|>', '-', 'Maintain Connections', 'Toggle Ctrl Key', 'Select With Filter...', 'Select Pipes With Filter', '-', '~Next Target|Tab', '~Previous Target|Shift+Tab']));
set('menuSprinkler', menu(['All Sprinklers', '-', 'Conventional', 'Pendent|>', 'Sidewall|>', 'Upright', 'Variable', 'Other']));
chev = '<svg width="4" height="8" viewBox="0 0 4 8"><path d="M0 0v8l4-4z" fill="currentColor"/></svg>';
set('menuEvery', '<div class="col1">' + menu(['By Filter...', '-', 'Benchmark', 'Protractor', 'Ruler', '-', 'All Sprinkler System Components', 'Coverage Cell', 'Curve Pipe|>', 'FDC', 'Fitting|>', 'Flow Device', 'Hanger', 'Hanger Assembly', 'Hose', 'Hydrant', 'Nozzle', 'Pipe|>', 'Pipeline', 'Pump', '*Sprinkler|>', 'Sprinkler Legend', 'Strainer', 'Supply', 'Sway Brace', 'Sway Brace Zone Legend', 'Sway Brace Legend', 'Sway Brace Tag', '-', 'Check Point Gauge', 'Floating Node', 'Hydraulic Wormhole', 'Node Tag', 'Remote Area|>', '-', 'Dimension', 'Star Dimension', 'Labels|>', 'Leader Line', 'Text Box', 'Text Line', 'Text Table']) +
  '</div><div class="col2">' + menu(['Arc', 'Attribute', 'Crosshatch', 'Cylinder', 'DWG Dimension', 'Ellipse', 'Light', 'Line Segment', 'Mesh', 'Picture', 'Point', 'Polyline', 'Polytriangle', 'Quad', 'Solid', 'Symbol', 'Triangle', '-', 'Beam|>', 'Board']) + '<div style="height:161px"></div>' + menu(['Clip Plane', 'Detail', 'Group', 'Part Tag', 'View']) + '</div>');

// drawing
function T(x, y, s) { return '<text x="' + x + '" y="' + y + '">' + s + '</text>'; }
function L(d, s, w, x) { return '<path d="' + d + '" fill="none" stroke="' + (s || '#000') + '" stroke-width="' + (w || 2) + '" ' + (x || '') + '/>'; }
function F(x, y, w, h) { return '<rect x="' + x + '" y="' + y + '" width="' + w + '" height="' + h + '" rx="2" fill="url(#or' + (w > h ? 'H' : 'V') + ')" stroke="#a85c00" stroke-width=".6"/>'; }
function grad(id, v, a, b) { return '<linearGradient id="' + id + '" ' + (v ? 'x2="0" y2="1"' : '') + '><stop offset="0" stop-color="' + a + '"/><stop offset=".5" stop-color="' + b + '"/><stop offset="1" stop-color="' + a + '"/></linearGradient>'; }
function hex(cy) { return '<path d="M1196 ' + (cy - 53) + 'h54l26 53-26 52h-54l-25-52z" fill="#ff0" stroke="#000" stroke-width="2"/>'; }
var lines = [312, 378, 445, 511, 577.5, 644, 710, 777, 843, 910].map(function (y) { return L('M1640 ' + y + 'H1848', '', 2); }).join('');
var words = ['OCCUPANCY', 'DENSITY', 'TOTAL HOSE', 'DRY CAPACITY', 'TOTAL HEADS', 'K-FACTOR', 'TOTAL WATER', 'TOTAL PRESSURE', 'BASE of RISER'];
var yy = [361, 427, 494, 560, 627, 693, 760, 826, 893];
set('canvas', '<defs>' + grad('dkH', 1, '#2b2b2b', '#4b4b4b') + grad('dkV', 0, '#2b2b2b', '#4b4b4b') + grad('gn', 0, '#006000', '#35c035') + grad('gnH', 1, '#006000', '#4fe04f') + grad('rd', 0, '#a00000', '#ff4040') + grad('orV', 1, '#ff9a10', '#ff8c00') + grad('orH', 0, '#d87400', '#ff9c18') + grad('wh', 1, '#bbb', '#fff') + '</defs>' +
  words.map(function (w, i) { return T(w[0] === 'T' ? 1655 : 1656, yy[i], w); }).join('') + lines + L('M1639.500 210V925', '', 3) +
  T(623, 584, 'Ordinary Group II-0.') +
  '<path d="M947 242H1100V257H962L955 881H1180V896H947V888H939z" fill="#000"/>' +
  L('M717.500 550.500H947M717.500 550.500V851H939', '#6c6c6c', 1, 'stroke-dasharray="40 21"') +
  '<rect x="1017" y="472" width="20" height="13" fill="#7a2c2c"/><path d="M1017 478.500h20" stroke="#a33"/>' +
  '<rect x="773" y="551" width="260" height="21.500" fill="url(#dkH)"/><rect x="738" y="585" width="22" height="146" fill="url(#dkV)"/>' +
  '<rect x="728" y="551" width="42" height="22" fill="url(#orV)"/><path d="M739 580v-7l9.500-11 9.500 11v7z" fill="#ff9000"/><path d="M739 573l9.500-11 9.500 11" fill="none" stroke="#e88200" stroke-width=".7"/>' + F(723.5, 545, 6, 34) + F(767.500, 545, 6, 34) + F(732, 580, 33, 6.500) +
  '<ellipse cx="748" cy="751" rx="24" ry="27" fill="none" stroke="#999" stroke-dasharray="7 3"/><ellipse cx="749" cy="752" rx="17.500" ry="20" fill="#0000a8"/><rect x="728" y="741" width="7" height="23" fill="#fe6"/><path d="M722 752.500h8" stroke="#e8b060" stroke-width="3"/><path d="M726 737.500h7M731 737v28" stroke="#d22"/>' +
  L('M757 769L786 819M792 830L842 918M765 762L843 813', '', 1.700) +
  '<ellipse cx="748.500" cy="753" rx="13" ry="13" fill="#f29000"/><path d="M739 736h19v19q-1 8-9.500 8t-9.500-8z" fill="url(#orH)" stroke="#b86800" stroke-width=".7"/>' + F(732, 730, 33, 6.500) +
  L('M748.500 768v14', '#e02020', 2.500) + '<path d="M734 781h29q-3 14-14.500 14.500Q737 795 734 781z" fill="#d00000"/><path d="M742 784h9l-2 8q-6-2-7-8z" fill="#f44" opacity=".5"/>' +
  '<rect x="762" y="745" width="24" height="14" fill="url(#gnH)"/><rect x="793" y="745" width="22" height="13" fill="#f7a020"/><path d="M797 752l6-6h9v12h-9z" fill="#fd6"/><path d="M798 742.500h11M798 762h13" stroke="#fda" stroke-width="2"/><circle cx="833" cy="752" r="11" fill="#f59a18"/><circle cx="832" cy="752" r="9" fill="#ffd060"/><path d="M817 745h16q7 2 6 9v12h-13v-8h-9z" fill="url(#wh)"/>' +
  F(771, 740, 4.500, 25) + F(786.500, 740, 5, 25) + F(813.500, 740, 5, 25) + F(820, 766, 25, 5.500) +
  '<rect x="825" y="771.500" width="15" height="50" fill="url(#gn)"/><path d="M824 821h16v12l-8 8-8-2 2-6z" fill="#c8ff70"/><path d="M828 824h8v9h-8z" fill="#ffc"/>' +
  '<rect x="785" y="764" width="7" height="54" fill="url(#rd)"/><rect x="785.500" y="818" width="6" height="12" fill="#bbb"/><path d="M785 827h7" stroke="#555"/>' +
  '<path d="M842.500 918L818 866l25-53h54l26 53-26 52zM842 918h55l4 8h-63z" fill="#ff0" stroke="#000" stroke-width="2"/>' + T(833, 882, '503') +
  '<circle cx="1004" cy="873" r="8.500" fill="#111"/><circle cx="1004" cy="873" r="13" fill="none" stroke="#111" stroke-width="1.500"/>' + L('M1004 874Q1012 730 1047 714', '#aaa', 2.500) + L('M1008 896l8 29', '', 1.700) +
  hex(677) + hex(782) + hex(888) + hex(993) +
  '<rect x="1226" y="729" width="15" height="107" fill="#000"/>' + T(1185, 797, '502') + T(1185, 903, '505') +
  L('M1110 762L1196 835M1104 714L1197 836M1143 714L1196 925M1152 714L1210 925M1164 714L1186 925M1177 714L1196 835M1190 760L1200 835', '', 1.600) +
  L('M1112 756h60', '#ff00ff', 3) + L('M1101.500 712v38', '#d00', 7) + '<circle cx="1181" cy="755" r="12" fill="none" stroke="#000" stroke-width="3"/><circle cx="1181" cy="756" r="5" fill="#e98a10" stroke="#000"/><path d="M1093 748h17v13h-14z" fill="#f59000" stroke="#a85c00"/><circle cx="1103" cy="755" r="5" fill="#ffb040" stroke="#944"/>');

// fine-tune tracking so each label fills its slot
function fit(el, target, v) {
  var r = document.createRange(); r.selectNodeContents(el);
  var b = r.getBoundingClientRect(), n = el.textContent.length;
  el.style.letterSpacing = ((target - (v ? b.height : b.width)) / n).toFixed(3) + 'px';
}
document.querySelectorAll('[data-w]').forEach(function (e) { fit(e, +e.dataset.w); });
document.querySelectorAll('[data-fit]').forEach(function (e) { e.style.letterSpacing = 0; fit(e, +e.dataset.fit); });
document.querySelectorAll('[data-v]').forEach(function (e) { fit(e, +e.dataset.v, 1); });
```
